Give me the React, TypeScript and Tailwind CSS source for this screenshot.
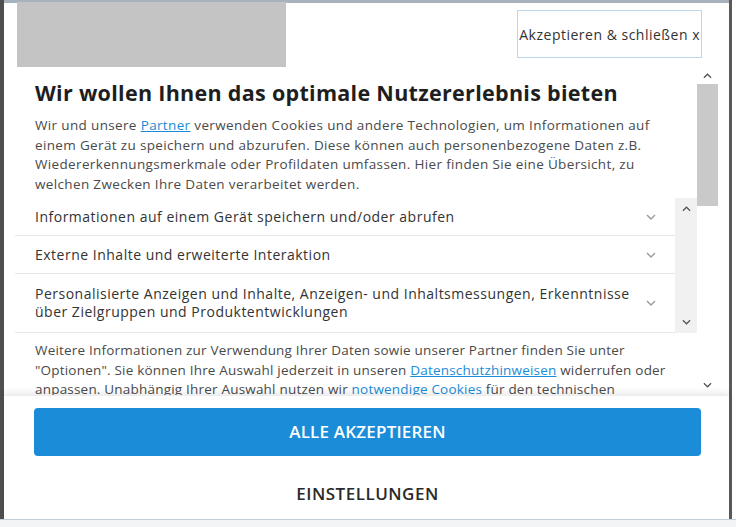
import React from 'react';

const font = { fontFamily: '"Open Sans", "Noto Sans", sans-serif' };

function Chevron({ dir = 'down', className = '' }: { dir?: 'up' | 'down'; className?: string }) {
  return (
    <svg viewBox="0 0 10 6" className={className} fill="none" stroke="currentColor" strokeWidth="1.4">
      {dir === 'down' ? <path d="M1 1l4 4 4-4" /> : <path d="M1 5l4-4 4 4" />}
    </svg>
  );
}

const rows = [
  { label: <>Informationen auf einem Gerät speichern und/oder abrufen</>, h: 'h-[38px]' },
  { label: <>Externe Inhalte und erweiterte Interaktion</>, h: 'h-[38px]' },
  {
    label: (
      <>
        Personalisierte Anzeigen und Inhalte, Anzeigen- und Inhaltsmessungen, Erkenntnisse
        <br />
        über Zielgruppen und Produktentwicklungen
      </>
    ),
    h: 'h-[59px]',
  },
];

export default function App() {
  return (
    <div className="w-[736px] h-[527px] flex flex-col bg-white overflow-hidden" style={font}>
      <div className="flex flex-1 min-h-0">
        <div className="w-[4px] bg-[#4f4f4f]" />

        {/* Dialog */}
        <div className="flex-1 flex flex-col min-w-0 border-t-[3px] border-[#a7b2bd]">
          {/* Header */}
          <div className="h-[64px] flex items-start shrink-0">
            <div className="ml-[13px] w-[269px] h-[65px] -mt-[1px] bg-[#c4c4c4]" />
            <button className="ml-auto mr-[27px] mt-[7px] w-[185px] h-[48px] border-[1.5px] border-[#bcd7ec] text-[14px] tracking-[0.5px] text-[#333] whitespace-nowrap overflow-hidden flex items-center justify-end pr-[1px]">
              Akzeptieren &amp; schließen x
            </button>
          </div>

          {/* Scroll area */}
          <div className="flex flex-1 min-h-0">
            <div className="flex-1 min-w-0 pl-[11px] overflow-hidden">
              <div className="pl-[20px] pr-[10px]">
                <h1 className="pt-[13px] text-[21.5px] leading-[26px] font-bold text-[#1e1e1e] tracking-[0.3px] whitespace-nowrap">
                  Wir wollen Ihnen das optimale Nutzererlebnis bieten
                </h1>
                <p className="mt-[10px] text-[13.5px] leading-[19.5px] tracking-[0.35px] text-[#4a4a4a] whitespace-nowrap">
                  Wir und unsere <span className="text-[#1a8cd8] underline">Partner</span> verwenden Cookies und andere Technologien, um Informationen auf
                  <br />
                  einem Gerät zu speichern und abzurufen. Diese können auch personenbezogene Daten z.B.
                  <br />
                  Wiedererkennungsmerkmale oder Profildaten umfassen. Hier finden Sie eine Übersicht, zu
                  <br />
                  welchen Zwecken Ihre Daten verarbeitet werden.
                </p>
              </div>

              {/* Purposes list with its own scrollbar */}
              <div className="mt-[4px] flex h-[135px]">
                <div className="flex-1 min-w-0">
                  {rows.map((r, i) => (
                    <div
                      key={i}
                      className={`${r.h} flex items-center pl-[20px] pr-[19px] border-b border-[#e8e8e8] text-[14px] leading-[18px] tracking-[0.5px] text-[#333]`}
                    >
                      <span className="flex-1 whitespace-nowrap">{r.label}</span>
                      <Chevron className="w-[10px] h-[6px] text-[#9a9a9a]" />
                    </div>
                  ))}
                </div>
                <div className="w-[22px] bg-[#f1f1f1] flex flex-col items-center justify-between py-[8px] text-[#555]">
                  <Chevron dir="up" className="w-[9px] h-[6px]" />
                  <Chevron className="w-[9px] h-[6px]" />
                </div>
              </div>

              <p className="mt-[8px] pl-[20px] text-[13.5px] leading-[19.5px] tracking-[0.2px] text-[#4a4a4a] whitespace-nowrap">
                Weitere Informationen zur Verwendung Ihrer Daten sowie unserer Partner finden Sie unter
                <br />
                "Optionen". Sie können Ihre Auswahl jederzeit in unseren <span className="text-[#1a8cd8] underline">Datenschutzhinweisen</span> widerrufen oder
                <br />
                anpassen. Unabhängig Ihrer Auswahl nutzen wir <span className="text-[#1a8cd8] underline">notwendige Cookies</span> für den technischen
              </p>
            </div>

            {/* Outer scrollbar */}
            <div className="w-[21px] mr-[11px] flex flex-col items-center text-[#555]">
              <div className="h-[17px] flex items-center justify-center">
                <Chevron dir="up" className="w-[9px] h-[6px]" />
              </div>
              <div className="w-full h-[122px] bg-[#c9c9c9]" />
              <div className="flex-1" />
              <div className="h-[20px] flex items-center justify-center">
                <Chevron className="w-[9px] h-[6px]" />
              </div>
            </div>
          </div>

          {/* Footer */}
          <div className="h-[124px] shrink-0 relative shadow-[0_-3px_6px_rgba(0,0,0,0.08)] border-t border-[#ececec] pt-[12px] pl-[30px] pr-[28px]">
            <button className="w-full h-[48px] rounded-[4px] bg-[#1a8cd8] text-white text-[17px] font-semibold tracking-[0.2px]">
              ALLE AKZEPTIEREN
            </button>
            <div className="mt-[28px] h-[20px] flex items-center justify-center text-[17px] font-semibold tracking-[0.5px] text-[#2a2a2a]">
              EINSTELLUNGEN
            </div>
          </div>
        </div>

        <div className="w-[3px] bg-[#5a5a5a]" />
        <div className="w-[4px] bg-white" />
      </div>
      <div className="h-[8px] bg-[#f2f4f6] border-t border-[#c6d0da]" />
    </div>
  );
}
